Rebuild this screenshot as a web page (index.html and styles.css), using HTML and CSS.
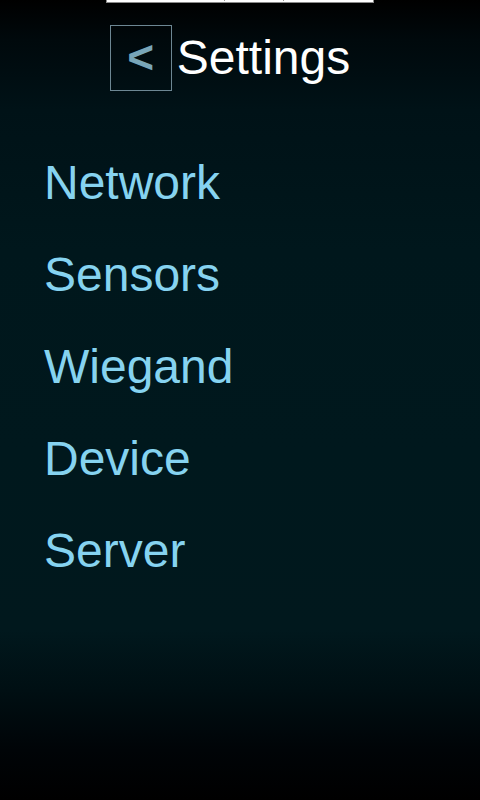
FILE: index.html
```html
<!DOCTYPE html>
<html>
<head>
<meta charset="utf-8">
<link rel="stylesheet" href="styles.css">
</head>
<body>
<div class="screen">
  <div class="topbar"><span class="seg"></span><span class="seg"></span><span class="seg last"></span></div>
  <header class="header">
    <button class="back">&lt;</button>
    <h1 class="title">Settings</h1>
  </header>
  <nav class="menu">
    <a class="item">Network</a>
    <a class="item">Sensors</a>
    <a class="item">Wiegand</a>
    <a class="item">Device</a>
    <a class="item">Server</a>
  </nav>
</div>
</body>
</html>
```

FILE: styles.css
```css
html, body {
  margin: 0;
  padding: 0;
  height: 100%;
}
body {
  font-family: "Liberation Sans", Arial, sans-serif;
  background: #000;
}
.screen {
  height: 800px;
  overflow: hidden;
  background: linear-gradient(to bottom,
    #000000 0px,
    #00090c 40px,
    #001217 110px,
    #00171c 250px,
    #00181d 450px,
    #01181d 630px,
    #000f13 690px,
    #000407 750px,
    #000000 800px);
  display: flex;
  flex-direction: column;
}
.topbar {
  align-self: center;
  margin-left: -1px;
  width: 266px;
  height: 2px;
  background: #fff;
  border: 1px solid #8a8a8a;
  border-top: none;
  display: flex;
}
.seg {
  flex: 0 0 118px;
  height: 1px;
  border-right: 1px solid #9a9a9a;
  box-sizing: border-box;
}
.seg:nth-child(2) { flex-basis: 59px; }
.seg.last { flex: 1; border-right: none; }
.header {
  display: flex;
  align-items: center;
  justify-content: center;
  padding-right: 20px;
  margin-top: 22px;
  gap: 5px;
}
.back {
  width: 62px;
  height: 66px;
  box-sizing: border-box;
  border: 1px solid #6d8793;
  background: transparent;
  color: #79a6b8;
  font-family: "Liberation Sans", Arial, sans-serif;
  font-weight: bold;
  font-size: 46px;
  line-height: 1;
  padding: 0 0 2px 0;
  margin: 0;
}
.title {
  margin: 0;
  font-weight: normal;
  font-size: 48px;
  line-height: 56px;
  color: #ffffff;
}
.menu {
  display: flex;
  flex-direction: column;
  gap: 36px;
  padding-left: 44px;
  margin-top: 64px;
}
.item {
  font-size: 48px;
  line-height: 56px;
  color: #86d3f0;
}
```
